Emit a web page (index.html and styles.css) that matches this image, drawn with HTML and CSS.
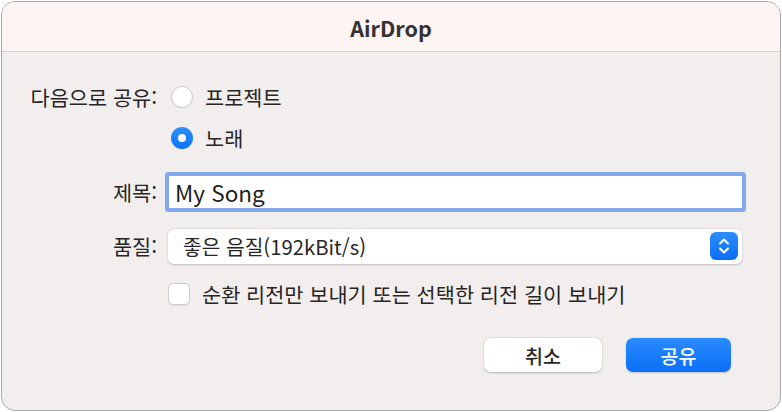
FILE: index.html
```html
<!DOCTYPE html>
<html lang="ko">
<head>
<meta charset="utf-8">
<title>AirDrop</title>
<link rel="stylesheet" href="styles.css">
</head>
<body>
<div class="window">
  <header class="titlebar">AirDrop</header>
  <main class="form">
    <div class="label">다음으로 공유:</div>
    <label class="radio-row"><span class="radio"></span><span>프로젝트</span></label>

    <div class="label"></div>
    <label class="radio-row"><span class="radio checked"></span><span>노래</span></label>

    <div class="label">제목:</div>
    <div class="field">My Song</div>

    <div class="label">품질:</div>
    <div class="popup">
      <span class="popup-text">좋은 음질(192kBit/s)</span>
      <span class="stepper">
        <svg width="14" height="20" viewBox="0 0 14 20"><path d="M3 7.5 L7 3.5 L11 7.5 M3 12.5 L7 16.5 L11 12.5" fill="none" stroke="#fff" stroke-width="2" stroke-linecap="round" stroke-linejoin="round"/></svg>
      </span>
    </div>

    <div class="label"></div>
    <label class="check-row"><span class="checkbox"></span><span>순환 리전만 보내기 또는 선택한 리전 길이 보내기</span></label>

    <div class="label"></div>
    <div class="buttons">
      <button class="btn">취소</button>
      <button class="btn primary">공유</button>
    </div>
  </main>
</div>
</body>
</html>
```
FILE: styles.css
```css
html, body {
  margin: 0;
  padding: 0;
  background: #ffffff;
}
body {
  font-family: "Noto Sans CJK KR", "Noto Sans", sans-serif;
  color: #272525;
}
.window {
  margin: 1px;
  width: 780px;
  height: 410px;
  box-sizing: border-box;
  border: 1px solid #a9a7a7;
  border-radius: 14px;
  overflow: hidden;
  background: #f3eeee;
}
.titlebar {
  height: 50px;
  box-sizing: border-box;
  border-bottom: 1px solid #d6d1d1;
  background: #fcf3f3;
  display: flex;
  align-items: center;
  justify-content: center;
  font-weight: 700;
  font-size: 21.5px;
  color: #363232;
  padding-top: 1px;
}
.form {
  display: grid;
  grid-template-columns: 155px 574px;
  grid-template-rows: 40px 42px 66px 42px 54px 68px;
  column-gap: 11px;
  padding-top: 25px;
  align-items: center;
  font-size: 20.8px;
}
.label {
  text-align: right;
}
.radio-row, .check-row {
  display: flex;
  align-items: center;
  gap: 12px;
}
.radio {
  margin-left: 3px;
  width: 22px;
  height: 22px;
  box-sizing: border-box;
  border-radius: 50%;
  background: #ffffff;
  border: 1px solid #cfcbcb;
  box-shadow: 0 0.5px 1px rgba(0,0,0,0.08);
  display: flex;
  align-items: center;
  justify-content: center;
}
.radio.checked {
  border: none;
  background: linear-gradient(#2f8fff, #0a74f8);
}
.radio.checked::after {
  content: "";
  width: 8px;
  height: 8px;
  border-radius: 50%;
  background: #ffffff;
}
.field {
  margin-left: 1px;
  height: 32px;
  box-sizing: border-box;
  background: #ffffff;
  box-shadow: 0 0 0 4px #81a9ee;
  border-radius: 1px;
  font-size: 22.5px;
  padding-left: 6px;
  display: flex;
  align-items: center;
  color: #1f1d1d;
}
.popup {
  height: 35px;
  border-radius: 6px;
  background: #ffffff;
  box-shadow: 0 0.5px 2px rgba(0,0,0,0.22);
  display: flex;
  align-items: center;
  justify-content: space-between;
  padding: 0 4px 0 15px;
}
.popup-text {
  font-size: 20.3px;
}
.stepper {
  width: 28px;
  height: 28px;
  border-radius: 6px;
  background: linear-gradient(#2d8dff, #0b6ef5);
  display: flex;
  align-items: center;
  justify-content: center;
}
.checkbox {
  width: 22px;
  height: 22px;
  box-sizing: border-box;
  border-radius: 5px;
  background: #ffffff;
  border: 1px solid #d0cccc;
  box-shadow: 0 0.5px 1px rgba(0,0,0,0.06);
}
.buttons {
  display: flex;
  justify-content: flex-end;
  gap: 24px;
  padding-right: 11px;
}
.btn {
  font-family: "Noto Sans CJK KR", "Noto Sans", sans-serif;
  font-size: 19.5px;
  font-weight: 500;
  height: 34px;
  width: 118px;
  border: none;
  border-radius: 7px;
  background: #ffffff;
  color: #2a2828;
  box-shadow: 0 0.5px 2px rgba(0,0,0,0.25);
  padding: 0;
}
.btn.primary {
  width: 105px;
  color: #ffffff;
  background: linear-gradient(#2a8bff, #0a6ff6);
  box-shadow: 0 0.5px 1.5px rgba(0,0,0,0.2);
}
```
